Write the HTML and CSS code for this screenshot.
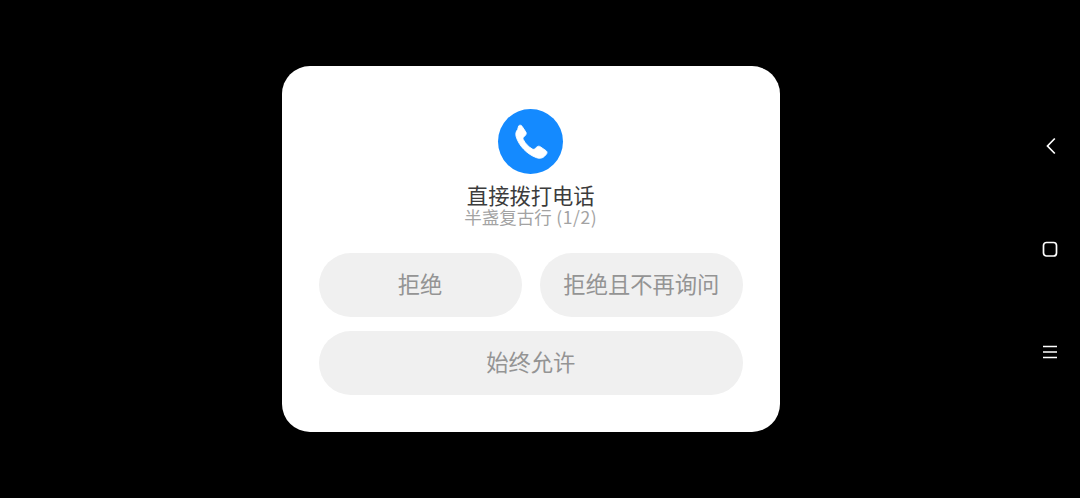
FILE: index.html
```html
<!DOCTYPE html>
<html>
  <head>
    <title>直接拨打电话</title>
    <meta charset="UTF-8" />
    <meta name="viewport" content="width=device-width, initial-scale=1" />
    <link rel="stylesheet" href="styles.css">
  </head>
  <body>
    <main class="stage">
      <div class="dialog">
        <div class="app-icon">
          <svg viewBox="0 0 65 65" width="65" height="65">
            <path class="phone" transform="translate(-2.2 -3.600) scale(1.120)" d="M19.5 21.6c-1.6 1.7-2 4-1.3 6.4 2.4 8 9.700 15.700 18.200 18.700 2.800 1 5.500.4 7-1.200l1.700-1.900c.9-1 .8-2.300-.2-3.100l-5.200-3.600c-1-.7-2.100-.6-3 .2l-1.700 1.600c-.7.6-1.500.7-2.300.3-3.300-1.800-6.600-5.200-8.200-8.600-.4-.8-.2-1.600.4-2.200l1.600-1.600c.8-.9.9-2 .2-3l-3.300-5c-.7-1.100-2.100-1.200-3-.3z"/>
          </svg>
        </div>
        <h1 class="title">直接拨打电话</h1>
        <p class="subtitle">半盏复古行<span class="count"> (1/2)</span></p>
        <div class="actions">
          <button class="btn">拒绝</button>
          <button class="btn">拒绝且不再询问</button>
          <button class="btn btn-wide">始终允许</button>
        </div>
      </div>
    </main>

    <nav class="nav-rail">
      <svg viewBox="0 0 16 18" width="16" height="18">
        <path class="nav-line" d="M12.800 1.500 5.500 9l7.300 7.500"/>
      </svg>
      <svg viewBox="0 0 16 18" width="16" height="18">
        <rect class="nav-line" x="1.500" y="2.500" width="13" height="13.500" rx="3"/>
      </svg>
      <svg viewBox="0 0 16 18" width="16" height="18">
        <path class="nav-line thin" d="M1 3.500h14M1 9h14M1 14.500h14"/>
      </svg>
    </nav>
  </body>
</html>
```

FILE: styles.css
```css
* {
  box-sizing: border-box;
}
html,
body {
  height: 100%;
}
body {
  margin: 0;
  background-color: #000;
  font-family: "Noto Sans CJK SC", "Liberation Sans", sans-serif;
  display: flex;
  overflow: hidden;
}
.stage {
  flex: 1;
  padding: 66px 0 0 281.500px;
}
.dialog {
  width: 498.500px;
  height: 366px;
  background: #fff;
  border-radius: 28px;
  padding: 43px 37px 0;
  display: flex;
  flex-direction: column;
  align-items: center;
}
.app-icon {
  width: 65px;
  height: 65px;
  border-radius: 50%;
  background: #148aff;
  flex: none;
}
.app-icon svg {
  display: block;
}
.phone {
  fill: #fff;
  stroke: #fff;
  stroke-width: 0.800;
  stroke-linejoin: round;
}
.title {
  margin: 8px 0 0;
  font-size: 21.300px;
  font-weight: 400;
  line-height: 26px;
  color: #3c3c3c;
}
.subtitle {
  margin: 0;
  font-size: 17.500px;
  line-height: 18px;
  color: #a3a3a3;
  white-space: nowrap;
}
.count {
  letter-spacing: 0.600px;
}
.actions {
  margin-top: 27px;
  width: 100%;
  display: grid;
  grid-template-columns: 1fr 1fr;
  column-gap: 18px;
  row-gap: 14px;
}
.btn {
  height: 64px;
  border: none;
  border-radius: 32px;
  background: #f0f0f0;
  color: #949494;
  font-family: inherit;
  font-size: 22.300px;
  padding: 0 0 4px;
}
.btn-wide {
  grid-column: 1 / 3;
}
.nav-rail {
  width: 60px;
  padding: 137px 30px 0 0;
  display: flex;
  flex-direction: column;
  align-items: flex-end;
  gap: 85px;
}
.nav-rail svg {
  display: block;
  margin-right: -8px;
}
.nav-line {
  fill: none;
  stroke: #fff;
  stroke-width: 1.700;
}
.nav-line.thin {
  stroke-width: 1.400;
}
```
